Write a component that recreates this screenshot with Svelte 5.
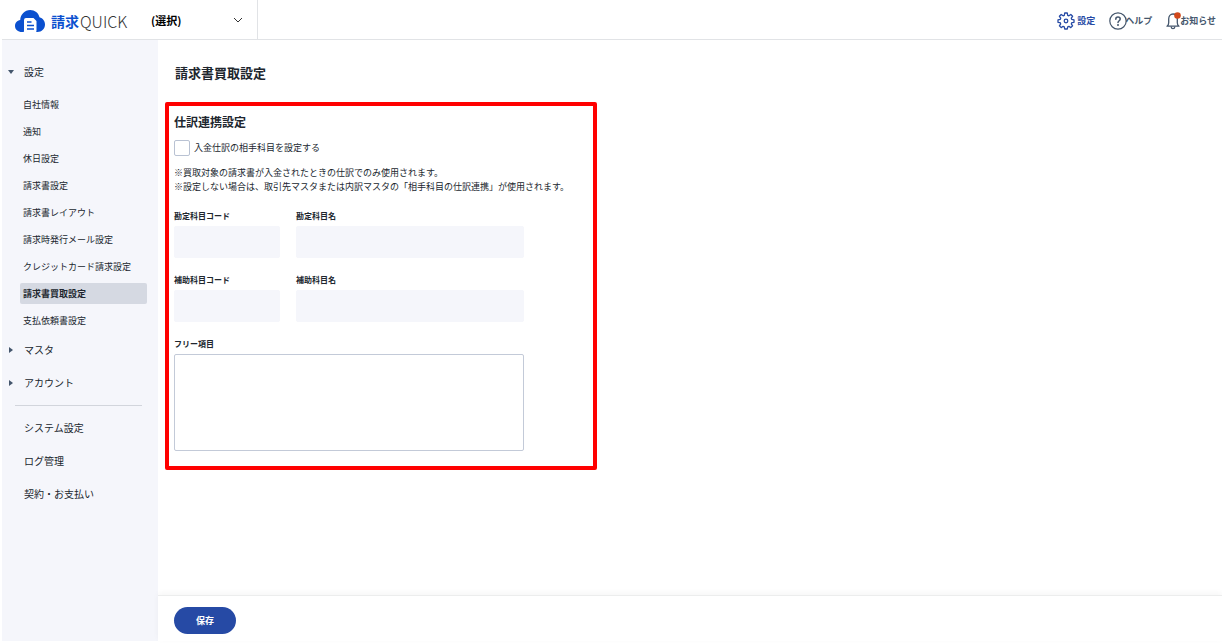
<script lang="ts">
  const settingItems = [
    "自社情報",
    "通知",
    "休日設定",
    "請求書設定",
    "請求書レイアウト",
    "請求時発行メール設定",
    "クレジットカード請求設定",
    "請求書買取設定",
    "支払依頼書設定",
  ];
  const closedGroups = ["マスタ", "アカウント"];
  const systemLinks = ["システム設定", "ログ管理", "契約・お支払い"];
  const current = "請求書買取設定";

  let useAccount = $state(false);
  let freeText = $state("");
</script>

<div class="app">
  <header class="topbar">
    <a class="logo" href="#home">
      <svg class="cloud" viewBox="0 0 30 23" aria-hidden="true">
        <path
          d="M7 22C3 22 0 19.5 0 16c0-3.200 2.200-5.600 5.200-6C5.500 4.500 9.700 0 15.200 0c4.600 0 8.300 3 9.300 7.300C27.800 8.300 30 11 30 14.500c0 4.200-3.200 7.500-7.600 7.500Z"
          fill="#0b50cf"
        />
        <path
          d="M8 23q1-.8 1-2.500V10q0-2 2-2h7.500l3 3v9.500q0 2.500-2.500 2.500Z"
          fill="#fff"
        />
        <path d="M12 12h4.500M12 15.500h7M12 19h7" stroke="#0b50cf" stroke-width="1.600" />
      </svg>
      <span class="logo-ja">請求</span><span class="logo-en">QUICK</span>
    </a>
    <div class="company">
      <select aria-label="会社">
        <option>(選択)</option>
      </select>
      <svg class="chevron" viewBox="0 0 10 6" aria-hidden="true">
        <path d="M1 1l4 4 4-4" fill="none" stroke="#333" />
      </svg>
    </div>
    <nav class="tools">
      <a class="tool active" href="#settings">
        <svg viewBox="0 0 18 18" fill="none" stroke="currentColor" stroke-width="1.300" stroke-linejoin="round" aria-hidden="true">
          <path
            d="M7.300 3.300 7.700 1h2.600l.4 2.300 1.200.5 1.900-1.300 1.800 1.800-1.300 1.900.5 1.200 2.200.4v2.500l-2.200.4-.5 1.200 1.300 1.900-1.800 1.800-1.900-1.300-1.200.5-.4 2.200H7.700l-.4-2.200-1.200-.5-1.900 1.300-1.800-1.800 1.300-1.900-.5-1.200L1 10.300V7.800l2.200-.4.500-1.200-1.300-1.900 1.800-1.800 1.900 1.300Z"
          />
          <circle cx="9" cy="9" r="1.800" />
        </svg>
        <span>設定</span>
      </a>
      <a class="tool help" href="#help">
        <svg viewBox="0 0 18 18" fill="none" stroke="currentColor" stroke-width="1.200" stroke-linecap="round" aria-hidden="true">
          <circle cx="9" cy="9" r="8.200" />
          <path d="M6.800 7.200c0-1.300 1-2.100 2.200-2.100s2.200.8 2.200 2c0 1.600-2.200 1.700-2.200 3.400" stroke-width="1.500" />
          <circle cx="9" cy="13" r=".4" fill="currentColor" />
        </svg>
        <span>ヘルプ</span>
      </a>
      <a class="tool notice" href="#notice">
        <svg viewBox="0 0 18 18" fill="none" stroke="currentColor" stroke-width="1.300" stroke-linejoin="round" aria-hidden="true">
          <path d="M1 14.200c1.500-1 1.700-2.200 1.700-3.500V7c0-3 1.800-5 4.300-5s4.300 2 4.300 5v3.700c0 1.300.2 2.500 1.700 3.500Z" />
          <path d="M5.100 14.600c.2 1.400.9 2.100 1.900 2.100s1.700-.7 1.900-2.100" />
          <circle cx="11.500" cy="3.500" r="3.300" fill="#d2491c" stroke="none" />
        </svg>
        <span>お知らせ</span>
      </a>
    </nav>
  </header>

  <div class="body">
    <aside class="sidebar">
      <button class="group open" type="button">設定</button>
      <ul class="sub">
        {#each settingItems as item}
          <li>
            <a href="#{item}" class:current={item === current}>{item}</a>
          </li>
        {/each}
      </ul>
      {#each closedGroups as group}
        <button class="group" type="button">{group}</button>
      {/each}
      <hr />
      {#each systemLinks as link}
        <a class="link" href="#{link}">{link}</a>
      {/each}
    </aside>

    <div class="content">
      <main>
        <h1>請求書買取設定</h1>
        <section class="panel">
          <h2>仕訳連携設定</h2>
          <label class="check">
            <input type="checkbox" bind:checked={useAccount} />
            入金仕訳の相手科目を設定する
          </label>
          <p class="note">
            ※買取対象の請求書が入金されたときの仕訳でのみ使用されます。<br />
            ※設定しない場合は、取引先マスタまたは内訳マスタの「相手科目の仕訳連携」が使用されます。
          </p>
          <div class="fields">
            <label class="field">
              勘定科目コード
              <input type="text" disabled={!useAccount} />
            </label>
            <label class="field">
              勘定科目名
              <input type="text" disabled />
            </label>
            <label class="field">
              補助科目コード
              <input type="text" disabled={!useAccount} />
            </label>
            <label class="field">
              補助科目名
              <input type="text" disabled />
            </label>
            <label class="field wide">
              フリー項目
              <textarea bind:value={freeText}></textarea>
            </label>
          </div>
        </section>
      </main>
      <footer>
        <button class="save" type="button">保存</button>
      </footer>
    </div>
  </div>
</div>

<style>
  :global(body) {
    margin: 0;
    background: #fff;
  }

  .app {
    display: flex;
    flex-direction: column;
    box-sizing: border-box;
    min-height: 100vh;
    padding: 0 0 3px 2px;
    color: #20262e;
    font-family: "Noto Sans CJK JP", sans-serif;
    font-size: 9px;
    line-height: 14px;
  }

  a {
    color: inherit;
    text-decoration: none;
  }

  button,
  input,
  select,
  textarea {
    box-sizing: border-box;
    margin: 0;
    font: inherit;
    color: inherit;
  }

  .topbar {
    display: flex;
    align-items: stretch;
    height: 39px;
    border-bottom: 1px solid #e1e3e6;
  }

  .logo {
    display: flex;
    align-items: center;
    box-sizing: border-box;
    width: 125px;
    padding: 3px 0 0 13px;
    white-space: nowrap;
  }

  .cloud {
    flex: none;
    width: 30px;
    height: 23px;
    margin-right: 6px;
  }

  .logo-ja {
    color: #0b50cf;
    font-size: 14px;
    font-weight: bold;
  }

  .logo-en {
    margin-left: 1px;
    color: #333;
    font-size: 16px;
    font-weight: 300;
  }

  .company {
    display: grid;
    align-items: center;
    width: 130px;
    border-right: 1px solid #e1e3e6;
  }

  .company select,
  .chevron {
    grid-area: 1 / 1;
  }

  .company select {
    height: 100%;
    padding: 0 0 0 24px;
    appearance: none;
    border: 0;
    background: none;
    color: #000;
    font-size: 11px;
    font-weight: bold;
  }

  .chevron {
    justify-self: end;
    width: 10px;
    height: 6px;
    margin-right: 14px;
    pointer-events: none;
  }

  .tools {
    display: flex;
    align-items: center;
    gap: 14px;
    margin-left: auto;
    padding: 2px 6px 0 0;
    color: #44566c;
    font-weight: bold;
  }

  .tool {
    display: flex;
    align-items: center;
  }

  .tool svg {
    width: 18px;
    height: 18px;
  }

  .tool.active {
    gap: 2px;
    color: #264aa5;
  }

  .help span {
    margin-left: -2px;
  }

  .notice span {
    margin-left: -4px;
  }

  .body {
    display: flex;
    flex: 1;
  }

  .sidebar {
    flex: none;
    box-sizing: border-box;
    width: 156px;
    padding: 15px 11px 0 0;
    background: #f5f6fb;
  }

  .group,
  .link {
    display: flex;
    align-items: center;
    width: 100%;
    height: 33px;
    padding: 0 0 0 22px;
    border: 0;
    background: none;
    font-size: 10px;
    text-align: left;
  }

  .group {
    padding-left: 7px;
  }

  .group::before {
    content: "";
    width: 0;
    margin-right: 11px;
    border: solid transparent;
    border-width: 3px 0 3px 4px;
    border-left-color: #44566c;
  }

  .group.open::before {
    margin-right: 10px;
    margin-left: -1px;
    border-width: 4px 3px 0;
    border-top-color: #44566c;
    border-left-color: transparent;
  }

  .sub {
    display: grid;
    gap: 6px;
    margin: 0;
    padding: 6px 0 2px 18px;
    list-style: none;
  }

  .sub a {
    display: block;
    padding: 0 3px;
    border-radius: 2px;
    line-height: 21px;
    white-space: nowrap;
  }

  .sub .current {
    background: #d5d9e2;
    font-weight: bold;
  }

  hr {
    margin: 6px 5px 5px 13px;
    border: 0;
    border-top: 1px solid #d2d5dc;
  }

  .content {
    display: flex;
    flex: 1;
    flex-direction: column;
    min-width: 0;
  }

  main {
    flex: 1;
    padding: 23px 7px;
  }

  h1 {
    margin: 0 0 19px 10px;
    font-size: 13px;
    line-height: 20px;
  }

  .panel {
    box-sizing: border-box;
    max-width: 432px;
    padding: 8px 5px 15px;
    border: 4px solid #f00;
    border-radius: 2px;
  }

  h2 {
    margin: 0;
    font-size: 12px;
    line-height: 16px;
  }

  .check {
    display: flex;
    align-items: center;
    gap: 4px;
    margin-top: 10px;
  }

  .check input {
    width: 16px;
    height: 16px;
    appearance: none;
    border: 1px solid #b9c2d3;
    border-radius: 2px;
    background: #fff;
  }

  .check input:checked {
    background: #264aa5;
  }

  .note {
    margin: 10px 0 16px;
    white-space: nowrap;
  }

  .fields {
    display: grid;
    grid-template-columns: 106px 228px;
    gap: 16px;
  }

  .field {
    display: grid;
    gap: 4px;
    font-size: 8px;
    font-weight: bold;
    line-height: 12px;
  }

  .field input {
    width: 100%;
    height: 32px;
    padding: 0 8px;
    border: 1px solid #c3cad8;
    border-radius: 2px;
    background: #fff;
  }

  .field input:disabled {
    border-color: #f5f6fb;
    background: #f5f6fb;
  }

  .wide {
    grid-column: 1 / -1;
  }

  .wide textarea {
    width: 100%;
    height: 97px;
    padding: 8px;
    border: 1px solid #c3cad8;
    border-radius: 2px;
    resize: none;
  }

  footer {
    padding: 11px 16px 7px;
    border-top: 1px solid #eceded;
    box-shadow: 0 -2px 6px rgba(0, 0, 0, 0.04);
  }

  .save {
    display: block;
    width: 62px;
    height: 27px;
    border: 0;
    border-radius: 14px;
    background: #264aa5;
    color: #fff;
    font-weight: bold;
  }
</style>
